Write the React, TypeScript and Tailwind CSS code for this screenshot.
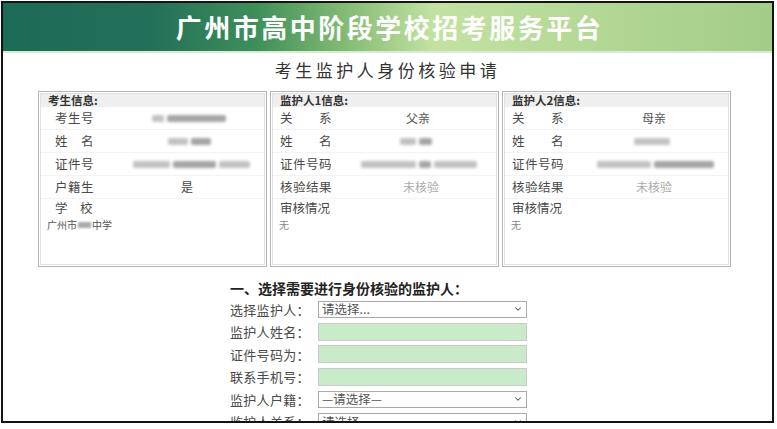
import React from "react";
import { ChevronDown } from "lucide-react";

const font = { fontFamily: '"Noto Sans CJK SC", "Noto Sans", sans-serif' };

function Blur({ w, segs }: { w: number; segs?: number[] }) {
  const s = segs ?? [1];
  return (
    <div className="flex items-center justify-center gap-[3px] blur-[1.5px]" style={{ width: w }}>
      {s.map((f, i) => (
        <div key={i} className="h-[7px] bg-[#8f8f8f] rounded-[2px]" style={{ width: Math.round(w * f), opacity: 0.55 + (i % 2) * 0.25 }} />
      ))}
    </div>
  );
}

function Row({ label, children, labelPad, valueCenter }: { label: string; children?: React.ReactNode; labelPad: number; valueCenter: number }) {
  return (
    <div className="flex items-center h-[23px] border-b border-[#f3f3f3] relative">
      <div className="text-[12.5px] leading-none text-[#4a4a4a] whitespace-pre tracking-[0.5px]" style={{ paddingLeft: labelPad }}>
        {label}
      </div>
      <div className="absolute top-0 h-full flex items-center justify-center" style={{ left: valueCenter - 80, width: 160 }}>
        {children}
      </div>
    </div>
  );
}

function Panel({ title, children }: { title: string; children: React.ReactNode }) {
  return (
    <div className="w-[229px] h-[176px] border border-[#b4b4b4] p-[1px] bg-white">
      <div className="h-full border border-[#e2e2e2]">
        <div className="h-[13px] bg-[#efefef] flex items-center pl-[7px] text-[11.5px] font-bold text-[#333] leading-none">{title}</div>
        {children}
      </div>
    </div>
  );
}

function FormRow({ label, kind, placeholder }: { label: string; kind: "select" | "input"; placeholder?: string }) {
  return (
    <div className="flex items-center h-[22.5px]">
      <div className="w-[88px] text-[13px] leading-none text-[#4a4a4a] tracking-[0.3px]">{label}</div>
      {kind === "select" ? (
        <div className="w-[209px] h-[17px] border border-[#aaa] bg-white flex items-center justify-between pl-[3px] pr-[3px]">
          <span className="text-[12.5px] text-[#555] leading-none">{placeholder}</span>
          <ChevronDown size={10} strokeWidth={2.5} className="text-[#555]" />
        </div>
      ) : (
        <div className="w-[209px] h-[18px] border border-[#c9c9c9] bg-[#c9ebc9]" />
      )}
    </div>
  );
}

export default function App() {
  return (
    <div className="w-[777px] h-[429px] bg-white overflow-hidden" style={font}>
      <div className="ml-[1px] mt-[1px] w-[773px] h-[422px] border-2 border-[#141414] overflow-hidden">
        <div
          className="h-[50px] flex items-center justify-center border-b-2 border-[#d9ecd0]"
          style={{ background: "linear-gradient(90deg, #1c6b57 0%, #24715a 20%, #3f8f5a 33%, #86bd74 45%, #c3e2a2 56%, #b7da98 72%, #a3cc88 100%)" }}
        >
          <div className="text-white text-[26px] font-bold tracking-[2.5px] leading-none ml-[4px]">广州市高中阶段学校招考服务平台</div>
        </div>
        <div className="text-center text-[17px] text-[#333] tracking-[3.5px] mt-[4px] h-[25px] leading-[25px]">考生监护人身份核验申请</div>
        <div className="flex gap-[3px] pl-[35px] mt-[9px]">
          <Panel title="考生信息:">
            <Row label="考生号" labelPad={14} valueCenter={148}>
              <Blur w={78} segs={[0.15, 0.75]} />
            </Row>
            <Row label="姓　名" labelPad={14} valueCenter={148}>
              <Blur w={44} segs={[0.45, 0.45]} />
            </Row>
            <Row label="证件号" labelPad={14} valueCenter={150}>
              <Blur w={124} segs={[0.3, 0.35, 0.25]} />
            </Row>
            <Row label="户籍生" labelPad={14} valueCenter={146}>
              <span className="text-[12px] text-[#444]">是</span>
            </Row>
            <div className="h-[17px] mt-[1px] flex items-center pl-[14px] text-[12.5px] leading-none text-[#4a4a4a]">学　校</div>
            <div className="pl-[6px] text-[10px] text-[#555] flex items-center leading-none h-[15px]">
              广州市<span className="inline-block w-[13px] h-[6px] bg-[#aaa] blur-[1px] mx-[1px]" />中学
            </div>
          </Panel>
          <Panel title="监护人1信息:">
            <Row label="关　　系" labelPad={7} valueCenter={145}>
              <span className="text-[12px] text-[#555]">父亲</span>
            </Row>
            <Row label="姓　　名" labelPad={7} valueCenter={143}>
              <Blur w={32} segs={[0.5, 0.4]} />
            </Row>
            <Row label="证件号码" labelPad={7} valueCenter={146}>
              <Blur w={122} segs={[0.45, 0.1, 0.35]} />
            </Row>
            <Row label="核验结果" labelPad={7} valueCenter={148}>
              <span className="text-[12px] text-[#aaa]">未核验</span>
            </Row>
            <div className="h-[17px] mt-[1px] flex items-center pl-[7px] text-[12.5px] leading-none text-[#4a4a4a]">审核情况</div>
            <div className="pl-[6px] text-[10px] text-[#888] leading-none h-[15px] flex items-center">无</div>
          </Panel>
          <Panel title="监护人2信息:">
            <Row label="关　　系" labelPad={7} valueCenter={149}>
              <span className="text-[12px] text-[#555]">母亲</span>
            </Row>
            <Row label="姓　　名" labelPad={7} valueCenter={147}>
              <Blur w={40} segs={[0.9]} />
            </Row>
            <Row label="证件号码" labelPad={7} valueCenter={150}>
              <Blur w={120} segs={[0.45, 0.5]} />
            </Row>
            <Row label="核验结果" labelPad={7} valueCenter={149}>
              <span className="text-[12px] text-[#aaa]">未核验</span>
            </Row>
            <div className="h-[17px] mt-[1px] flex items-center pl-[7px] text-[12.5px] leading-none text-[#4a4a4a]">审核情况</div>
            <div className="pl-[6px] text-[10px] text-[#888] leading-none h-[15px] flex items-center">无</div>
          </Panel>
        </div>
        <div className="pl-[227px] mt-[12px]">
          <div className="text-[14px] font-bold text-[#222] leading-[18px] h-[19px]">一、选择需要进行身份核验的监护人：</div>
          <FormRow label="选择监护人：" kind="select" placeholder="请选择..." />
          <FormRow label="监护人姓名：" kind="input" />
          <FormRow label="证件号码为：" kind="input" />
          <FormRow label="联系手机号：" kind="input" />
          <FormRow label="监护人户籍：" kind="select" placeholder="—请选择—" />
          <FormRow label="监护人关系：" kind="select" placeholder="请选择" />
        </div>
      </div>
    </div>
  );
}
